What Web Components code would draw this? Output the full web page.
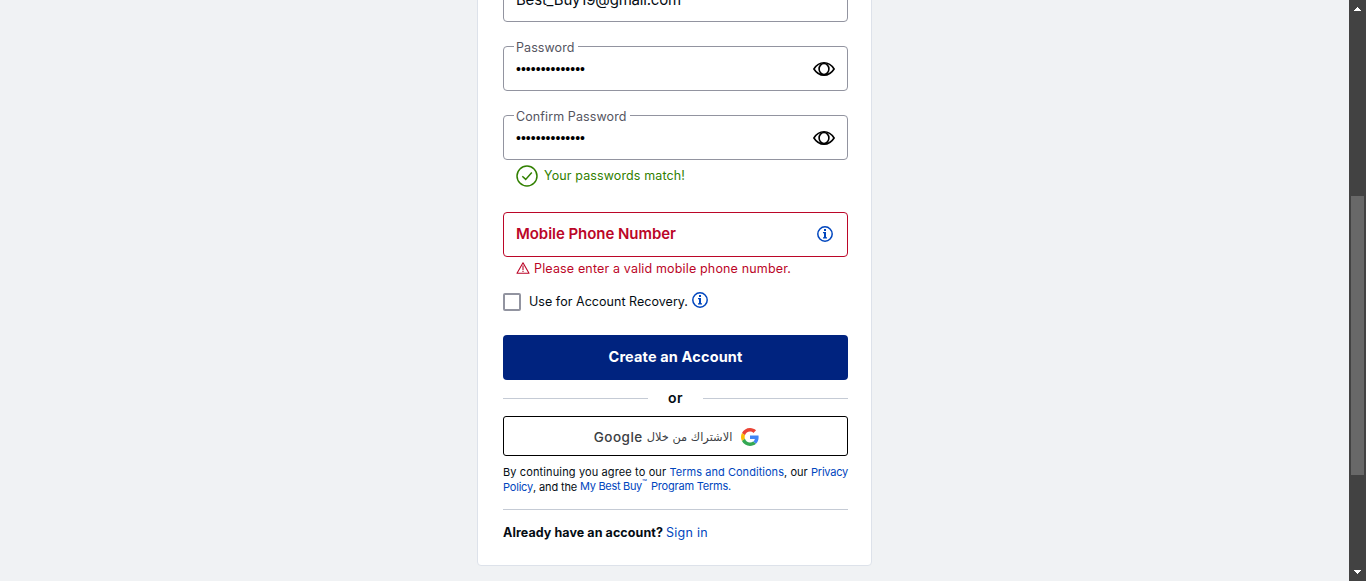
<!DOCTYPE html>
<html lang="en">
<head>
<meta charset="utf-8">
<title>Create an Account</title>
<style>
html,body{margin:0;height:100%;overflow:hidden;background:#f0f2f4}
body{font-family:Inter,"Liberation Sans",sans-serif;color:#040c13}
</style>
</head>
<body>
<account-page></account-page>
<script>
const define = (name, html, setup) => customElements.define(name, class extends HTMLElement {
  connectedCallback() {
    if (this.shadowRoot) return;
    const t = document.createElement('template');
    t.innerHTML = html;
    this.attachShadow({mode: 'open'}).append(t.content.cloneNode(true));
    if (setup) setup(this, this.shadowRoot);
  }
});

/* Single line of text, tracked to the width given in "w". */
define('track-text', `<style>:host{display:inline-block;white-space:pre}span{display:inline-block}</style><span><slot></slot></span>`,
  (el, root) => {
    const w = parseFloat(el.getAttribute('w'));
    const span = root.querySelector('span');
    const n = el.textContent.length;
    span.style.letterSpacing = (w - span.getBoundingClientRect().width) / n + 'px';
  });

define('eye-icon', `<style>:host{display:block;width:22px;height:16px}svg{display:block}</style>
<svg width="22" height="16" viewBox="0 0 22 16" fill="none" stroke="#000" stroke-width="1.6"><path d="M.9 8C3.6 3.700 7 1.800 11 1.800S18.400 3.700 21.100 8C18.400 12.300 15 14.200 11 14.200S3.600 12.300.9 8Z"/><ellipse cx="11" cy="8" rx="4.900" ry="5.500"/></svg>`);

define('info-icon', `<style>:host{display:block;width:16px;height:16px}svg{display:block}</style>
<svg width="16" height="16" viewBox="0 0 16 16"><circle cx="8" cy="8" r="7.200" fill="none" stroke="#0046be" stroke-width="1.500"/><path d="M7 3h2v2H7zM6 6h3V12H7V7.200H6zM6 11.200h4v1.200H6z" fill="#0046be"/></svg>`);

define('check-icon', `<style>:host{display:block;width:22px;height:22px}svg{display:block}</style>
<svg width="22" height="22" viewBox="0 0 22 22" fill="none" stroke="#318000" stroke-width="1.500"><circle cx="11" cy="11" r="10"/><path d="M6.300 11.200l3.400 3.200 6.100-6.800"/></svg>`);

define('warning-icon', `<style>:host{display:block;width:14px;height:12px}svg{display:block}</style>
<svg width="14" height="12" viewBox="0 0 14 12" fill="none" stroke="#bb0628" stroke-width="1.100" stroke-linejoin="round"><path d="M7 .8L13 11.200H1ZM7 3.600v4.600M7 9v1.100"/></svg>`);

define('google-icon', `<style>:host{display:block;width:18px;height:18px}svg{display:block}</style>
<svg width="18" height="18" viewBox="0 0 48 48"><path fill="#EA4335" d="M24 9.500c3.540 0 6.710 1.220 9.210 3.600l6.850-6.850C35.900 2.380 30.470 0 24 0 14.620 0 6.510 5.380 2.560 13.220l7.980 6.190C12.430 13.720 17.740 9.500 24 9.500z"/><path fill="#4285F4" d="M46.980 24.550c0-1.570-.15-3.090-.38-4.550H24v9.020h12.940c-.58 2.960-2.260 5.480-4.780 7.180l7.730 6c4.510-4.180 7.090-10.360 7.090-17.650z"/><path fill="#FBBC05" d="M10.530 28.590c-.48-1.450-.76-2.990-.76-4.590s.27-3.140.76-4.590l-7.980-6.190C.92 16.460 0 20.120 0 24c0 3.880.92 7.540 2.560 10.780l7.970-6.190z"/><path fill="#34A853" d="M24 48c6.480 0 11.930-2.130 15.890-5.810l-7.730-6c-2.150 1.450-4.920 2.300-8.160 2.300-6.260 0-11.570-4.220-13.470-9.910l-7.980 6.190C6.510 42.620 14.620 48 24 48z"/></svg>`);

define('form-field', `<style>
:host{display:flex;position:relative;box-sizing:border-box;height:45px;border:1px solid #9294a0;border-radius:4px;padding:0 12px;align-items:center;justify-content:space-between;background:#fff;font-size:15px;line-height:20px}
:host([invalid]){border-color:#bb0628;color:#bb0628;font-weight:600;padding:0 14px 2px 12px}
.label{position:absolute;left:10px;top:-8px;padding:0 3px 0 2px;background:#fff;color:#55555f;font-size:12.500px;line-height:18px}
.label:not(.on){display:none}
::slotted([slot=icon]){flex:none}
</style><div class="label"><slot name="label"></slot></div><slot></slot><slot name="icon"></slot>`,
  (el, root) => { if (el.querySelector('[slot=label]')) root.querySelector('.label').classList.add('on'); });

define('password-dots', `<style>:host{display:block;font:14px/20px "Liberation Sans",sans-serif;color:#000;letter-spacing:.03px}</style>••••••••••••••`);

define('status-line', `<style>
:host{display:flex;align-items:center;padding-left:13px;font-size:12.500px}
:host([kind=ok]){color:#318000;gap:6px;height:22px;margin-top:5px}
:host([kind=ok]) ::slotted(track-text){margin-top:-2px}
:host([kind=error]){color:#bb0628;gap:4px;height:18px;margin-top:2px}
</style><slot name="icon"></slot><slot></slot>`);

define('check-option', `<style>
:host{display:flex;align-items:center;height:20px;margin-top:15px;font-size:12.500px}
i{box-sizing:border-box;width:18px;height:18px;border:2px solid #9294a0;border-radius:2px;margin-right:8px}
::slotted(track-text){margin-top:-2px}
::slotted(info-icon){margin:-4px 0 0 4px}
</style><i></i><slot></slot>`);

define('primary-button', `<style>
:host{display:block;margin-top:23px}
button{display:flex;align-items:center;justify-content:center;width:100%;height:45px;border:0;border-radius:4px;background:#00237f;color:#fff;font:700 14.500px/20px Inter,sans-serif;padding:0 0 1px}
</style><button><slot></slot></button>`);

define('or-divider', `<style>
:host{display:flex;align-items:center;height:36px;font-weight:600;font-size:14px;line-height:20px;justify-content:space-between}
i{width:145px;height:1px;background:#c5cbd5}
</style><i></i><slot></slot><i></i>`);

define('google-button', `<style>
:host{display:block}
button{display:flex;align-items:center;justify-content:center;width:100%;height:40px;box-sizing:border-box;border:1px solid #000;border-radius:3px;background:#fff;color:#3c4043;font:500 13.500px/20px Inter,sans-serif;padding:2px 0 0 2px}
.ar{font:11.400px/20px "DejaVu Sans",sans-serif;margin:0 9px 0 4px}
</style><button><slot></slot><span class="ar" dir="rtl"><slot name="ar"></slot></span><google-icon></google-icon></button>`);

define('link-text', `<style>:host{color:#0046be}</style><slot></slot>`);

define('legal-note', `<style>
:host{display:block;margin-top:9px;font-size:11px;height:44px;border-bottom:1px solid #c5cbd5}
div{display:flex;height:14px;line-height:14px;align-items:center}
.second{margin-top:1px}
.up{position:relative;top:-1px}
.tm{font-size:8px;align-self:flex-start;line-height:8px;margin-top:-2px}
</style>
<div><track-text w="166.500">By continuing you agree to our </track-text><link-text><track-text w="114.500">Terms and Conditions</track-text></link-text><track-text w="27">, our </track-text><link-text><track-text w="37">Privacy</track-text></link-text></div>
<div class="second"><link-text><track-text w="30">Policy</track-text></link-text><track-text w="47">, and the </track-text><link-text class="up"><track-text w="62">My Best Buy</track-text></link-text><link-text class="tm"><track-text w="9">™</track-text></link-text><link-text class="up"><track-text w="80">Program Terms.</track-text></link-text></div>`);

define('sign-in-row', `<style>:host{display:flex;height:20px;align-items:center;margin-top:12px;gap:3px;font-size:12.500px}b{font-weight:700}</style>
<b><track-text w="160">Already have an account?</track-text></b><link-text><track-text w="42">Sign in</track-text></link-text>`);

define('account-card', `<style>
:host{display:flex;flex-direction:column;box-sizing:border-box;width:395px;height:626px;margin-top:-60px;padding:36px 23px 0 25px;background:#fff;border:1px solid #dde2ea;border-radius:4px;flex:none}
.gap{margin-top:24px}.phone{margin-top:25px}
</style>
<form-field><track-text w="165">Best_Buy19@gmail.com</track-text></form-field>
<form-field class="gap"><track-text slot="label" w="58.500">Password</track-text><password-dots></password-dots><eye-icon slot="icon"></eye-icon></form-field>
<form-field class="gap"><track-text slot="label" w="110.500">Confirm Password</track-text><password-dots></password-dots><eye-icon slot="icon"></eye-icon></form-field>
<status-line kind="ok"><check-icon slot="icon"></check-icon><track-text w="141">Your passwords match!</track-text></status-line>
<form-field invalid class="phone"><track-text w="160">Mobile Phone Number</track-text><info-icon slot="icon"></info-icon></form-field>
<status-line kind="error"><warning-icon slot="icon"></warning-icon><track-text w="257">Please enter a valid mobile phone number.</track-text></status-line>
<check-option><track-text w="159">Use for Account Recovery.</track-text><info-icon></info-icon></check-option>
<primary-button><track-text w="134">Create an Account</track-text></primary-button>
<or-divider><track-text w="15">or</track-text></or-divider>
<google-button><track-text w="49">Google</track-text><span slot="ar">الاشتراك من خلال</span></google-button>
<legal-note></legal-note>
<sign-in-row></sign-in-row>`);

define('scroll-bar', `<style>
:host{display:flex;flex-direction:column;align-items:center;justify-content:space-between;box-sizing:border-box;width:17px;background:#424242;padding:7px 0;flex:none}
svg{display:block;flex:none}
i{width:13px;height:279px;background:#686868;margin-top:90px}
</style><svg width="7" height="4"><path d="M3 0h1v1h1v1h1v1h1v1H0V3h1V2h1V1h1z" fill="#fff"/></svg><i></i><svg width="7" height="4"><path d="M0 0h7v1H6v1H5v1H4v1H3V3H2V2H1V1H0z" fill="#fff"/></svg>`);

define('account-page', `<style>
:host{display:flex;height:581px;overflow:hidden;background:#f0f2f4}
main{flex:1;display:flex;align-items:flex-start;justify-content:center}
</style><main><account-card></account-card></main><scroll-bar></scroll-bar>`);
</script>
</body>
</html>
